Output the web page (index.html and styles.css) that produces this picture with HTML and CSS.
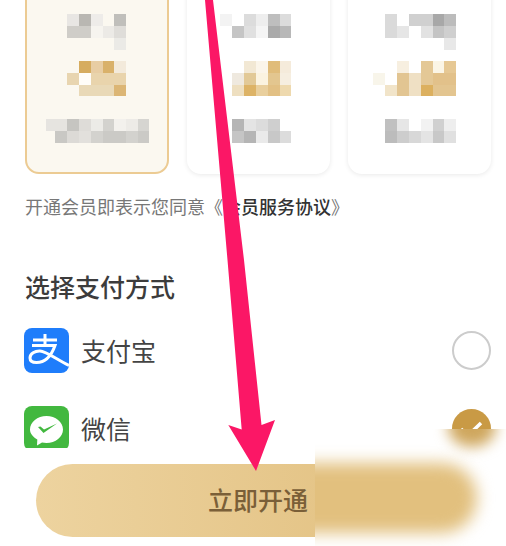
FILE: index.html
```html
<!DOCTYPE html>
<html lang="zh-CN">
<head>
    <meta charset="UTF-8">
    <meta name="viewport" content="width=device-width, initial-scale=1.0">
    <title>开通会员</title>
    <link rel="stylesheet" href="styles.css">
</head>
<body>
    <div class="page">
        <div class="plans">
            <div class="plan plan-active">
                <svg class="mosaic" width="140" height="190" viewBox="27 -18 140 190" shape-rendering="crispEdges">
                    <rect x="67" y="14" width="12" height="12" fill="#e8e6e3"/><rect x="79" y="14" width="12" height="12" fill="#b9b7b2"/><rect x="91" y="14" width="12" height="12" fill="#eeece9"/><rect x="114" y="14" width="12" height="12" fill="#c0bfbb"/>
                    <rect x="67" y="26" width="24" height="12" fill="#cfcdc8"/><rect x="91" y="26" width="12" height="12" fill="#f6f4ef"/><rect x="103" y="26" width="11" height="12" fill="#eceae6"/><rect x="114" y="26" width="12" height="12" fill="#dfddd9"/>
                    <rect x="114" y="38" width="12" height="12" fill="#ebeae6"/>
                    <rect x="79" y="61" width="12" height="12" fill="#d6ac5f"/><rect x="91" y="61" width="12" height="12" fill="#e8cda3"/><rect x="103" y="61" width="11" height="12" fill="#d9b16a"/><rect x="114" y="61" width="12" height="12" fill="#f3eadb"/>
                    <rect x="67" y="73" width="12" height="12" fill="#e8d5b0"/><rect x="79" y="73" width="12" height="12" fill="#fffdf8"/><rect x="91" y="73" width="35" height="12" fill="#e9d4ac"/>
                    <rect x="79" y="85" width="35" height="11" fill="#e9d9b7"/><rect x="114" y="85" width="12" height="11" fill="#dcb675"/>
                    <rect x="46" y="119" width="21" height="12" fill="#e6e4e0"/><rect x="67" y="119" width="12" height="12" fill="#c6c5c1"/><rect x="79" y="119" width="12" height="12" fill="#dedcd8"/><rect x="91" y="119" width="12" height="12" fill="#ecebe7"/><rect x="103" y="119" width="11" height="12" fill="#d3d2ce"/><rect x="114" y="119" width="12" height="12" fill="#f3f1ed"/><rect x="126" y="119" width="12" height="12" fill="#edebe7"/><rect x="138" y="119" width="11" height="12" fill="#d6d5d1"/>
                    <rect x="55" y="131" width="12" height="12" fill="#c9c8c4"/><rect x="67" y="131" width="12" height="12" fill="#dcdad6"/><rect x="79" y="131" width="12" height="12" fill="#e2e0dc"/><rect x="91" y="131" width="12" height="12" fill="#d3d2ce"/><rect x="103" y="131" width="23" height="12" fill="#cbcac6"/><rect x="126" y="131" width="12" height="12" fill="#d3d2ce"/><rect x="138" y="131" width="11" height="12" fill="#cbcac6"/>
                </svg>
            </div>
            <div class="plan">
                <svg class="mosaic" width="143" height="194" viewBox="187 -20 143 194" shape-rendering="crispEdges">
                    <rect x="220" y="14" width="12" height="12" fill="#f3f3f3"/><rect x="244" y="14" width="12" height="12" fill="#dcdcdc"/><rect x="256" y="14" width="12" height="12" fill="#eeeeee"/><rect x="268" y="14" width="12" height="12" fill="#bebebe"/><rect x="280" y="14" width="11" height="12" fill="#dcdcdc"/>
                    <rect x="232" y="26" width="12" height="12" fill="#c5c5c5"/><rect x="244" y="26" width="12" height="12" fill="#e0e0e0"/><rect x="256" y="26" width="12" height="12" fill="#f5f5f5"/><rect x="268" y="26" width="12" height="12" fill="#aaaaaa"/><rect x="280" y="26" width="11" height="12" fill="#b8b8b8"/>
                    <rect x="244" y="61" width="12" height="12" fill="#f2e8d4"/><rect x="256" y="61" width="12" height="12" fill="#fbf5ea"/><rect x="268" y="61" width="12" height="12" fill="#e0bc7a"/><rect x="280" y="61" width="11" height="12" fill="#f5ebdb"/>
                    <rect x="232" y="73" width="12" height="12" fill="#efe9df"/><rect x="244" y="73" width="12" height="12" fill="#e2c997"/><rect x="256" y="73" width="12" height="12" fill="#fbf3e0"/><rect x="268" y="73" width="12" height="12" fill="#e3c68f"/><rect x="280" y="73" width="11" height="12" fill="#f6eee0"/>
                    <rect x="232" y="85" width="12" height="11" fill="#eedfc0"/><rect x="244" y="85" width="12" height="11" fill="#ddb366"/><rect x="256" y="85" width="12" height="11" fill="#e9cf9d"/><rect x="268" y="85" width="12" height="11" fill="#e2c084"/><rect x="280" y="85" width="11" height="11" fill="#eed9ae"/>
                    <rect x="232" y="119" width="12" height="12" fill="#b5b5b5"/><rect x="244" y="119" width="12" height="12" fill="#e4e4e4"/><rect x="256" y="119" width="12" height="12" fill="#dcdcdc"/><rect x="268" y="119" width="12" height="12" fill="#cfcfcf"/>
                    <rect x="232" y="131" width="12" height="12" fill="#c5c5c5"/><rect x="244" y="131" width="12" height="12" fill="#b5b5b5"/><rect x="256" y="131" width="12" height="12" fill="#eaeaea"/><rect x="268" y="131" width="12" height="12" fill="#c8c8c8"/><rect x="280" y="131" width="11" height="12" fill="#dcdcdc"/>
                </svg>
            </div>
            <div class="plan">
                <svg class="mosaic" width="143" height="194" viewBox="348 -20 143 194" shape-rendering="crispEdges">
                    <rect x="385" y="14" width="12" height="24" fill="#dadada"/><rect x="409" y="14" width="24" height="12" fill="#d0d0d0"/><rect x="433" y="14" width="11" height="12" fill="#a8a8a8"/><rect x="444" y="14" width="12" height="12" fill="#bcbcbc"/>
                    <rect x="397" y="26" width="12" height="12" fill="#e6e6e6"/><rect x="421" y="26" width="12" height="12" fill="#e2e2e2"/><rect x="433" y="26" width="11" height="12" fill="#c4c4c4"/><rect x="444" y="26" width="12" height="12" fill="#cfcfcf"/>
                    <rect x="444" y="38" width="12" height="12" fill="#e8e8e8"/>
                    <rect x="397" y="61" width="12" height="12" fill="#f7efe0"/><rect x="421" y="61" width="12" height="12" fill="#e4c896"/><rect x="433" y="61" width="11" height="12" fill="#fbf5e6"/><rect x="444" y="61" width="12" height="12" fill="#e6c894"/>
                    <rect x="373" y="73" width="12" height="12" fill="#f8f5ea"/><rect x="397" y="73" width="12" height="12" fill="#e2c592"/><rect x="409" y="73" width="12" height="12" fill="#efe0c4"/><rect x="421" y="73" width="12" height="12" fill="#e4c896"/><rect x="433" y="73" width="23" height="12" fill="#e2c18a"/>
                    <rect x="385" y="85" width="12" height="11" fill="#f1e4c9"/><rect x="397" y="85" width="12" height="11" fill="#e2c592"/><rect x="409" y="85" width="12" height="11" fill="#efe0c4"/><rect x="421" y="85" width="12" height="11" fill="#dcb05f"/><rect x="433" y="85" width="23" height="11" fill="#e3c590"/>
                    <rect x="385" y="119" width="12" height="12" fill="#c0c0c0"/><rect x="397" y="119" width="12" height="12" fill="#e6e6e6"/><rect x="421" y="119" width="12" height="12" fill="#f2f2f2"/><rect x="433" y="119" width="11" height="12" fill="#d0d0d0"/><rect x="444" y="119" width="12" height="12" fill="#eeeeee"/>
                    <rect x="385" y="131" width="12" height="12" fill="#bcbcbc"/><rect x="397" y="131" width="12" height="12" fill="#cdcdcd"/><rect x="409" y="131" width="12" height="12" fill="#d8d8d8"/><rect x="421" y="131" width="12" height="12" fill="#e4e4e4"/><rect x="433" y="131" width="11" height="12" fill="#c8c8c8"/><rect x="444" y="131" width="12" height="12" fill="#e0e0e0"/>
                </svg>
            </div>
        </div>

        <p class="agreement">开通会员即表示您同意《<b>会员服务协议</b>》</p>

        <h3 class="pay-title">选择支付方式</h3>
        <div class="pay-list">
            <div class="pay-row">
                <svg class="pay-icon" viewBox="0 0 45 45">
                    <rect width="45" height="45" rx="8" fill="#1f7dfb"/>
                    <path d="M9 12H33M21 6V17M8 17.500H31C28 26 22 34.500 12.500 34.500C8 34.500 6 32.500 6 30C6 25.500 11 22.800 16 23C22 23.300 32 31 45 37.500" fill="none" stroke="#fff" stroke-width="3"/>
                </svg>
                <span class="pay-name">支付宝</span>
                <span class="radio"></span>
            </div>
            <div class="pay-row">
                <svg class="pay-icon" viewBox="0 0 45 45">
                    <rect width="45" height="45" rx="8" fill="#42b83f"/>
                    <path d="M22.500 10C31.500 10 39 16 39 23.500C39 31 31.500 37 22.500 37C20.800 37 19.300 36.800 18 36.500L13 39.500L13.300 33.500C9 31 6 27.500 6 23.500C6 16 13.500 10 22.500 10Z" fill="#fff"/>
                    <path d="M14 21L16.500 20.500L20 23.500L33 17.500L19.500 27Z" fill="#42b83f"/>
                </svg>
                <span class="pay-name">微信</span>
                <span class="radio radio-on">
                    <svg width="39" height="39" viewBox="0 0 39 39"><path d="M9 20L16 26.500L29 14" fill="none" stroke="#fff" stroke-width="3.500"/></svg>
                </span>
            </div>
        </div>

        <button class="open-btn">立即开通</button>

        <!-- 打码区域 -->
        <div class="smudge">
            <div class="smudge-dot"></div>
            <div class="smudge-pill"></div>
        </div>

        <!-- 红色箭头标注 -->
        <svg class="arrow" width="506" height="546" viewBox="0 0 506 546">
            <path d="M205 0H213L244 260L261.500 425L275 420L256 471L228.300 425L241.700 429.500L227.500 260Z" fill="#fb1766"/>
        </svg>
    </div>
</body>
</html>
```

FILE: styles.css
```css
* {
    margin: 0;
    padding: 0;
    box-sizing: border-box;
}

html, body {
    background: white;
}

.page {
    position: relative;
    width: 506px;
    height: 546px;
    overflow: hidden;
    font-family: "Noto Sans CJK SC", "Noto Sans", sans-serif;
}

.plans {
    display: flex;
    gap: 18px;
    height: 174px;
    padding: 0 15px 0 25px;
    align-items: flex-end;
}

.plan {
    width: 143px;
    height: 194px;
    flex: none;
    background: white;
    border-radius: 14px;
    box-shadow: 0 1px 5px rgba(0,0,0,0.09);
}

.plan-active {
    width: 144px;
    background: #fbf8f0;
    border: 2px solid #eccb93;
    box-shadow: none;
}

.mosaic {
    display: block;
    filter: blur(0.4px);
}

.agreement {
    margin: 19px 0 0 25px;
    font-size: 18px;
    line-height: 26px;
    color: #777;
}

.agreement b {
    color: #333;
    font-weight: 500;
}

.pay-title {
    margin: 50px 0 0 25px;
    font-size: 25px;
    line-height: 34px;
    font-weight: 500;
    color: #3c3c3c;
}

.pay-list {
    height: 120px;
    margin-top: 25px;
    padding: 0 15px 0 24px;
    overflow: hidden;
    display: flex;
    flex-direction: column;
    gap: 33px;
}

.pay-row {
    display: flex;
    align-items: center;
    height: 45px;
    flex: none;
}

.pay-icon {
    width: 45px;
    height: 45px;
    flex: none;
}

.pay-name {
    margin-left: 12px;
    padding-bottom: 2px;
    font-size: 25px;
    color: #444;
}

.radio {
    width: 39px;
    height: 39px;
    margin-left: auto;
    border: 2px solid #ccc;
    border-radius: 50%;
}

.radio-on {
    border: none;
    background: #c99a45;
}

.radio-on svg {
    display: block;
}

.open-btn {
    display: block;
    width: 444px;
    height: 73px;
    margin: 16px 0 0 36px;
    padding-bottom: 4px;
    border: none;
    border-radius: 37px;
    background: linear-gradient(90deg, #edd39f 0%, #e0bd7b 100%);
    font-family: inherit;
    font-size: 25px;
    font-weight: 500;
    color: #7a5f38;
}

.smudge {
    position: absolute;
    left: 315px;
    top: 429px;
    width: 191px;
    height: 117px;
    background: white;
    overflow: hidden;
}

.smudge-dot {
    position: absolute;
    left: 133px;
    top: -22px;
    width: 48px;
    height: 40px;
    border-radius: 50%;
    background: #cfa75e;
    filter: blur(7px);
}

.smudge-pill {
    position: absolute;
    left: -60px;
    top: 34px;
    width: 222px;
    height: 70px;
    border-radius: 35px;
    background: #e2c07e;
    filter: blur(8px);
}

.arrow {
    position: absolute;
    left: 0;
    top: 0;
}
```
